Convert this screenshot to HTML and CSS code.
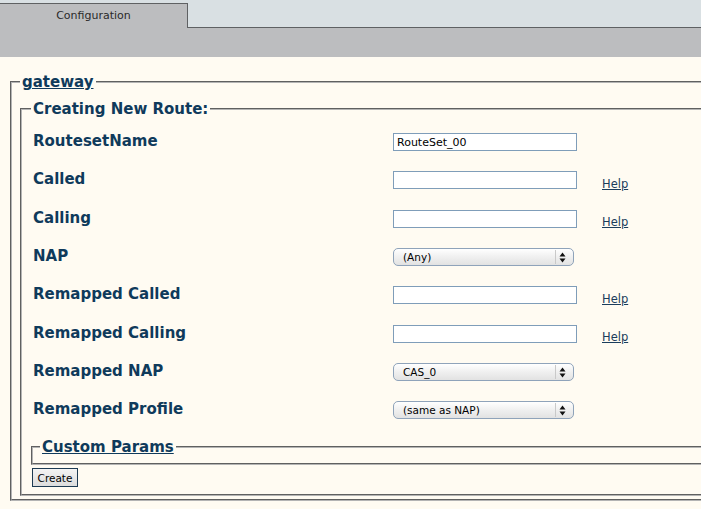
FILE: index.html
```html
<!DOCTYPE html>
<html>
<head>
<meta charset="utf-8">
<link rel="stylesheet" href="styles.css">
</head>
<body>
<div class="tabbar">
  <div class="tab">Configuration</div>
</div>
<div class="band"></div>
<fieldset class="outer">
  <legend class="lg lg-link"><a href="#">gateway</a></legend>
  <fieldset class="inner">
    <legend class="lg">Creating New Route:</legend>
    <div class="row">
      <div class="label">RoutesetName</div>
      <input class="txt" type="text" value="RouteSet_00">
      <span></span>
    </div>
    <div class="row">
      <div class="label">Called</div>
      <input class="txt" type="text">
      <a class="help" href="#">Help</a>
    </div>
    <div class="row">
      <div class="label">Calling</div>
      <input class="txt" type="text">
      <a class="help" href="#">Help</a>
    </div>
    <div class="row">
      <div class="label">NAP</div>
      <div class="sel"><select><option>(Any)</option></select><span class="sep"></span><svg class="arr" width="7" height="11" viewBox="0 0 7 11"><path d="M3.5 0.5 L6.5 4.5 L0.5 4.5 Z M3.5 10.5 L6.5 6.5 L0.5 6.5 Z" fill="#111"/></svg></div>
      <span></span>
    </div>
    <div class="row">
      <div class="label">Remapped Called</div>
      <input class="txt" type="text">
      <a class="help" href="#">Help</a>
    </div>
    <div class="row">
      <div class="label">Remapped Calling</div>
      <input class="txt" type="text">
      <a class="help" href="#">Help</a>
    </div>
    <div class="row">
      <div class="label">Remapped NAP</div>
      <div class="sel"><select><option>CAS_0</option></select><span class="sep"></span><svg class="arr" width="7" height="11" viewBox="0 0 7 11"><path d="M3.5 0.5 L6.5 4.5 L0.5 4.5 Z M3.5 10.5 L6.5 6.5 L0.5 6.5 Z" fill="#111"/></svg></div>
      <span></span>
    </div>
    <div class="row">
      <div class="label">Remapped Profile</div>
      <div class="sel"><select><option>(same as NAP)</option></select><span class="sep"></span><svg class="arr" width="7" height="11" viewBox="0 0 7 11"><path d="M3.5 0.5 L6.5 4.5 L0.5 4.5 Z M3.5 10.5 L6.5 6.5 L0.5 6.5 Z" fill="#111"/></svg></div>
      <span></span>
    </div>
    <fieldset class="custom">
      <legend class="lg lg-link"><a href="#">Custom Params</a></legend>
    </fieldset>
    <button class="btn" type="button">Create</button>
  </fieldset>
</fieldset>
</body>
</html>
```

FILE: styles.css
```css
html, body {
  margin: 0;
  padding: 0;
}
body {
  background: #fffbf2;
  font-family: "DejaVu Sans", Verdana, sans-serif;
  overflow: hidden;
  width: 701px;
  height: 509px;
}
.tabbar {
  display: flex;
  align-items: flex-end;
  height: 27px;
  background: #d9e0e3;
  border-bottom: 1px solid #5f6163;
}
.tab {
  box-sizing: border-box;
  width: 188px;
  height: 25px;
  margin-bottom: -1px;
  background: #bcbdbf;
  border-top: 1px solid #5f6163;
  border-right: 1px solid #5f6163;
  font-size: 11px;
  color: #2a2a2a;
  text-align: center;
  padding-top: 5px;
}
.band {
  height: 29px;
  background: #bcbdbf;
}
fieldset {
  border: 2px groove #b4b4b4;
  margin: 0;
  min-width: 0;
}
.outer {
  margin: 16px 0 0 10px;
  width: 760px;
  padding: 9px 8px 3px 8px;
}
.inner {
  margin: 0;
  padding: 4px 8px 7px 9px;
}
.lg {
  padding: 0 2px;
  font-weight: bold;
  font-size: 15px;
  color: #0f3a5b;
}
.lg a {
  color: #0f3a5b;
  text-decoration: underline;
}
.row {
  display: grid;
  grid-template-columns: 362px 209px auto;
  align-items: center;
  height: 38.33px;
}
.label {
  padding-left: 2px;
  font-weight: bold;
  font-size: 15px;
  color: #0f3a5b;
}
.txt {
  box-sizing: border-box;
  width: 184px;
  height: 18px;
  margin: 2px 0 0 0;
  padding: 0 3px;
  border: 1px solid #7f9db9;
  background: #fff;
  font-family: "DejaVu Sans", sans-serif;
  font-size: 11px;
  line-height: 16px;
  color: #000;
  outline: none;
}
.help {
  font-size: 11.5px;
  color: #1b3d5c;
  text-decoration: underline;
  margin-top: 9px;
}
.sel {
  position: relative;
  width: 181px;
  height: 18px;
  margin-top: 2px;
}
.sel select {
  display: block;
  appearance: none;
  -webkit-appearance: none;
  box-sizing: border-box;
  width: 181px;
  height: 18px;
  margin: 0;
  padding: 0 0 0 9px;
  border: 1px solid #8fa3ba;
  border-radius: 5px;
  background: linear-gradient(#ffffff, #f1f1f1 45%, #e2e2e2);
  font-family: "DejaVu Sans", sans-serif;
  font-size: 10.5px;
  line-height: 16px;
  color: #000;
  outline: none;
}
.sep {
  position: absolute;
  left: 162px;
  top: 2px;
  width: 1px;
  height: 14px;
  background: #c9c9c9;
}
.arr {
  position: absolute;
  left: 166px;
  top: 4px;
}
.custom {
  margin: 9px 0 2px 0;
  padding: 0 7px 7px 7px;
}
.btn {
  box-sizing: border-box;
  width: 46px;
  height: 19px;
  margin-left: 1px;
  padding: 0;
  border: 1px solid #1d3a52;
  background: linear-gradient(#f4f4f4, #dcdcdc);
  font-family: "DejaVu Sans", sans-serif;
  font-size: 10.5px;
  color: #000;
}
```
